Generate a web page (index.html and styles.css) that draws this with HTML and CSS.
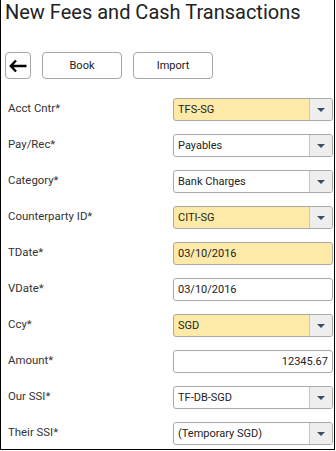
FILE: index.html
```html
<!DOCTYPE html>
<html lang="en">
<head>
    <meta charset="UTF-8">
    <title>New Fees and Cash Transactions</title>
    <meta name="viewport" content="width=device-width, initial-scale=1.0">
    <link rel="stylesheet" href="styles.css">
</head>
<body>

<div class="screen">
    <h1 class="title">New Fees and Cash Transactions</h1>

    <div class="toolbar">
        <button class="btn btn-back" type="button" aria-label="Back">
            <svg width="18" height="14" viewBox="0 0 18 14"><path d="M7 1.5 L1.8 7 L7 12.5 M2 7 H17.5" fill="none" stroke="#000" stroke-width="2.4"/></svg>
        </button>
        <button class="btn" type="button">Book</button>
        <button class="btn" type="button">Import</button>
    </div>

    <div class="form">
        <div class="row">
            <label>Acct Cntr*</label>
            <div class="field select required"><span class="value">TFS-SG</span><span class="arrow"></span></div>
        </div>
        <div class="row">
            <label>Pay/Rec*</label>
            <div class="field select"><span class="value">Payables</span><span class="arrow"></span></div>
        </div>
        <div class="row">
            <label>Category*</label>
            <div class="field select"><span class="value">Bank Charges</span><span class="arrow"></span></div>
        </div>
        <div class="row">
            <label>Counterparty ID*</label>
            <div class="field select required"><span class="value">CITI-SG</span><span class="arrow"></span></div>
        </div>
        <div class="row">
            <label>TDate*</label>
            <div class="field required"><span class="value">03/10/2016</span></div>
        </div>
        <div class="row">
            <label>VDate*</label>
            <div class="field"><span class="value">03/10/2016</span></div>
        </div>
        <div class="row">
            <label>Ccy*</label>
            <div class="field select required"><span class="value">SGD</span><span class="arrow"></span></div>
        </div>
        <div class="row">
            <label>Amount*</label>
            <div class="field number"><span class="value">12345.67</span></div>
        </div>
        <div class="row">
            <label>Our SSI*</label>
            <div class="field select"><span class="value">TF-DB-SGD</span><span class="arrow"></span></div>
        </div>
        <div class="row">
            <label>Their SSI*</label>
            <div class="field select"><span class="value">(Temporary SGD)</span><span class="arrow"></span></div>
        </div>
    </div>
</div>

</body>
</html>
```

FILE: styles.css
```css
body {
    margin: 0;
    font-family: Roboto, "Liberation Sans", Arial, sans-serif;
    color: #333;
    background: #fff;
}
.screen {
    width: 333px;
    height: 449px;
    border: 1px solid #000;
    border-top: none;
    box-sizing: content-box;
}
.title {
    margin: 0;
    padding: 0 0 0 4px;
    font-size: 20px;
    font-weight: normal;
    line-height: 24px;
    color: #222;
}
.toolbar {
    display: flex;
    gap: 11px;
    margin: 28px 0 0 4px;
}
.btn {
    width: 80px;
    height: 27px;
    padding: 0;
    border: 1px solid #a6a6a6;
    border-radius: 4px;
    background: #fff;
    font-family: inherit;
    font-size: 11px;
    color: #222;
}
.btn-back {
    display: flex;
    align-items: center;
    justify-content: center;
    width: 26px;
}
.form {
    margin-top: 19px;
}
.row {
    display: flex;
    justify-content: space-between;
    align-items: flex-start;
    height: 36px;
    padding: 0 1px 0 7px;
}
.row label {
    font-size: 11.4px;
    padding-top: 3px;
    color: #333;
}
.field {
    display: flex;
    width: 160px;
    height: 23px;
    box-sizing: border-box;
    border: 1px solid #a9a9a9;
    border-radius: 3px;
    background: #fff;
    font-size: 11px;
    color: #222;
    overflow: hidden;
}
.field.required {
    background: #feeaa8;
}
.value {
    flex: 1;
    padding: 0 4px;
    line-height: 21px;
}
.number .value {
    text-align: right;
}
.arrow {
    width: 22px;
    border-left: 1px solid #c8c8c8;
    background: #eee;
    position: relative;
}
.arrow::after {
    content: "";
    position: absolute;
    left: 7px;
    top: 9px;
    border-left: 4px solid transparent;
    border-right: 4px solid transparent;
    border-top: 4px solid #34506c;
}
```
